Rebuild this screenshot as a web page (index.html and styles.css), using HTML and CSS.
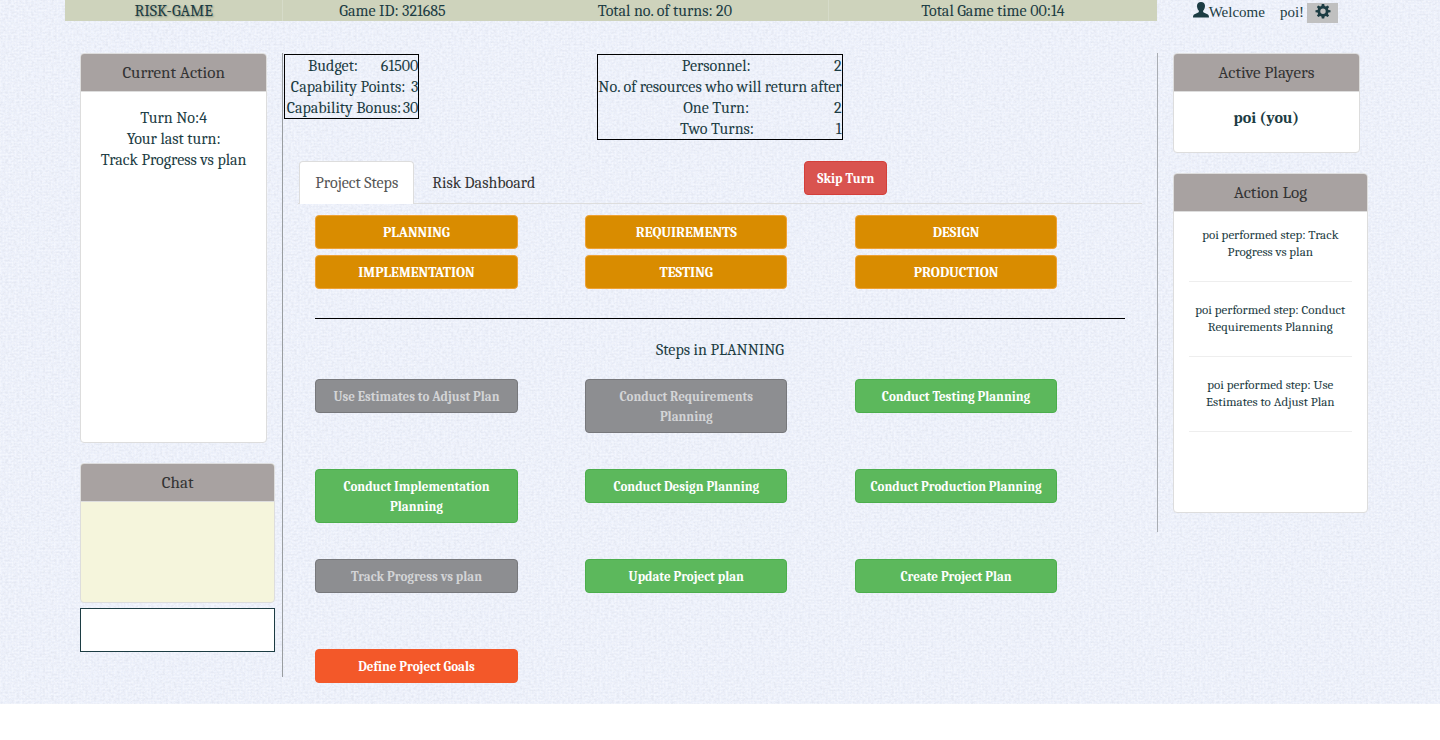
FILE: index.html
```html
<!DOCTYPE html>
<html lang="en">
<head>
<meta charset="utf-8">
<title>RISK-GAME</title>
<link rel="stylesheet" href="styles.css">
</head>
<body>
<div class="page">
  <header class="topbar">
    <div class="stat brand">RISK-GAME</div>
    <div class="stat">Game ID: 321685</div>
    <div class="stat turns">Total no. of turns: 20</div>
    <div class="stat">Total Game time 00:14</div>
    <div class="user">
      <svg class="user-icon" viewBox="0 0 16 16" aria-hidden="true"><path d="M8 0C10.500 0 12 1.400 12 3.800C12 5.800 11.300 7.600 10.300 8.600C9.900 9.300 10 10.200 10.700 10.600L14.500 12.300C15.600 12.900 16 13.800 16 15.500H0C0 13.800 .4 12.900 1.500 12.300L5.300 10.600C6 10.200 6.100 9.300 5.700 8.600C4.700 7.600 4 5.800 4 3.800C4 1.400 5.500 0 8 0Z"/></svg>
      <span class="welcome">Welcome</span><span class="name">poi!</span>
      <button class="settings" type="button" aria-label="Settings">
        <svg class="cog" viewBox="0 0 16 16" aria-hidden="true"><path fill-rule="evenodd" d="M6.800 1H9.200L9.600 3.100L10.900 3.600L12.700 2.400L14.100 3.900L12.900 5.700L13.400 6.900L15.500 7.200V9.200L13.400 9.600L12.900 10.900L14.100 12.600L12.600 14.100L10.900 12.900L9.600 13.400L9.200 15.500H6.800L6.400 13.400L5.100 12.900L3.400 14.100L1.900 12.600L3.100 10.900L2.600 9.600L.5 9.200V7.200L2.600 6.900L3.100 5.700L1.900 3.900L3.300 2.400L5.100 3.600L6.400 3.100ZM8 5.500A2.700 2.700 0 1 0 8 10.900A2.700 2.700 0 1 0 8 5.500Z"/></svg>
      </button>
    </div>
  </header>

  <div class="board">
    <aside class="left">
      <section class="panel action">
        <h2 class="panel-title">Current Action</h2>
        <div class="panel-body">Turn No:4<br>Your last turn:<br>Track Progress vs plan</div>
      </section>
      <section class="panel chat">
        <h2 class="panel-title">Chat</h2>
        <div class="panel-body"></div>
      </section>
      <input class="chat-input" type="text" aria-label="Chat message">
    </aside>

    <main class="center">
      <div class="resources">
        <dl class="figures">
          <div><dt>Budget:</dt><dd>61500</dd></div>
          <div><dt>Capability Points:</dt><dd>3</dd></div>
          <div><dt>Capability Bonus:</dt><dd>30</dd></div>
        </dl>
        <dl class="figures staff">
          <div><dt>Personnel:</dt><dd>2</dd></div>
          <div><dt>No. of resources who will return after</dt></div>
          <div><dt>One Turn:</dt><dd>2</dd></div>
          <div><dt>Two Turns:</dt><dd>1</dd></div>
        </dl>
      </div>

      <div class="tabs">
        <nav class="tab-list">
          <a class="tab active" href="#steps">Project Steps</a>
          <a class="tab" href="#risks">Risk Dashboard</a>
        </nav>
        <div><button class="btn skip" type="button">Skip Turn</button></div>
      </div>

      <div class="tab-page" id="steps">
        <div class="phases">
          <button class="btn phase" type="button">PLANNING</button>
          <button class="btn phase" type="button">REQUIREMENTS</button>
          <button class="btn phase" type="button">DESIGN</button>
          <button class="btn phase" type="button">IMPLEMENTATION</button>
          <button class="btn phase" type="button">TESTING</button>
          <button class="btn phase" type="button">PRODUCTION</button>
        </div>
        <hr class="rule">
        <p class="caption">Steps in PLANNING</p>
        <div class="steps">
          <button class="btn done" type="button" disabled>Use Estimates to Adjust Plan</button>
          <button class="btn done" type="button" disabled>Conduct Requirements<br>Planning</button>
          <button class="btn open" type="button">Conduct Testing Planning</button>
          <button class="btn open" type="button">Conduct Implementation<br>Planning</button>
          <button class="btn open" type="button">Conduct Design Planning</button>
          <button class="btn open" type="button">Conduct Production Planning</button>
          <button class="btn done" type="button" disabled>Track Progress vs plan</button>
          <button class="btn open" type="button">Update Project plan</button>
          <button class="btn open" type="button">Create Project Plan</button>
          <button class="btn urgent" type="button">Define Project Goals</button>
        </div>
      </div>
    </main>

    <aside class="right">
      <section class="panel players">
        <h2 class="panel-title">Active Players</h2>
        <div class="panel-body"><strong>poi (you)</strong></div>
      </section>
      <section class="panel log">
        <h2 class="panel-title">Action Log</h2>
        <ul class="entries">
          <li>poi performed step: Track Progress vs plan</li>
          <li>poi performed step: Conduct Requirements Planning</li>
          <li>poi performed step: Use Estimates to Adjust Plan</li>
        </ul>
      </section>
    </aside>
  </div>
</div>
</body>
</html>
```
FILE: styles.css
```css
* { box-sizing: border-box; }

body {
  margin: 0;
  background: #fff;
  color: #1c3c43;
  font-family: Cambria, "Liberation Serif", serif;
  font-size: 16px;
  line-height: 21px;
}

button, input { font: inherit; }

/* Pale woven paper: fine noise stretched along the thread direction. */
.page {
  padding: 0 65px 20px;
  background-color: #eff3fd;
  background-image:
    url("data:image/svg+xml,%3Csvg xmlns='http://www.w3.org/2000/svg' width='300' height='300'%3E%3Cfilter id='h' x='0' y='0' width='100%25' height='100%25'%3E%3CfeTurbulence type='fractalNoise' baseFrequency='.35 .5' numOctaves='2' seed='4' stitchTiles='stitch'/%3E%3CfeColorMatrix values='0 0 0 0 .75 0 0 0 0 .78 0 0 0 0 .87 1.8 0 0 0 -.65'/%3E%3C/filter%3E%3Crect width='300' height='300' filter='url(%23h)'/%3E%3C/svg%3E"),
    repeating-linear-gradient(0deg, rgba(255, 255, 255, .2) 0 1px, transparent 1px 3px),
    repeating-linear-gradient(90deg, rgba(255, 255, 255, .2) 0 1px, transparent 1px 3px);
}

.topbar {
  display: grid;
  grid-template-columns: 2fr 2fr 3fr 3fr 2fr;
  grid-template-rows: 21px;
  margin-bottom: 32px;
}

.stat { padding-top: 1px; background: #ced3bc; text-align: center; }
.brand { border-right: 1px solid #d6dbc9; text-shadow: 1px 1px 2px #89917d; }
.turns { border-right: 1px solid #d6dbc9; }

.user {
  display: flex;
  align-items: flex-start;
  padding: 2px 0 0 36px;
  font-family: "Liberation Serif", serif;
  font-size: 15px;
}
.user-icon { width: 16px; height: 16px; fill: #1c3c43; }
.name { margin: 0 3px 0 15px; }
.settings {
  display: flex;
  justify-content: center;
  width: 31px;
  height: 20px;
  margin-top: 1px;
  padding: 0;
  border: 0;
  background: #c0c0c0;
}
.cog { width: 16px; height: 16px; fill: #1c3c43; }

.board {
  display: grid;
  grid-template-columns: minmax(0, 2fr) minmax(0, 8fr) minmax(0, 2fr);
  align-items: start;
}

.left { padding: 0 15px 25px; border-right: 1px solid #999da0; }
.right { padding: 0 15px 19px; border-left: 1px solid #a9adb3; }

.panel {
  margin-bottom: 20px;
  border: 1px solid #ddd;
  border-radius: 4px;
  background: #fff;
  text-align: center;
}
.panel-title {
  margin: 0;
  padding: 8px 15px;
  border-bottom: 1px solid #ddd;
  border-radius: 3px 3px 0 0;
  background: #a8a2a1;
  color: #333;
  font-size: 17px;
  font-weight: 400;
}
.panel-body { padding: 16px 15px; }

.action { min-height: 390px; }
.players { min-height: 100px; }
.chat { margin: 0 -8px 5px 0; background: #f5f5dc; }
.chat .panel-body { height: 100px; }
.chat-input {
  display: block;
  width: calc(100% + 8px);
  height: 44px;
  padding: 8px;
  border: 1px solid #1c3c43;
  border-radius: 0;
  background: #fff;
}

.log { min-height: 340px; margin-right: -8px; margin-bottom: 0; }
.entries { margin: 0; padding: 0 15px; list-style: none; font-size: 13px; line-height: 17px; }
.entries li { height: 75px; padding: 19px 5px; border-bottom: 1px solid #eee; }
.entries li:first-child { height: 70px; padding-top: 14px; }

.center { padding: 0 15px; }

.resources {
  display: grid;
  grid-template-columns: 1fr auto 1fr;
  align-items: start;
  height: 108px;
  margin: 0 -14px;
  padding-top: 1px;
}
.figures {
  justify-self: start;
  width: 135px;
  margin: 0;
  border: 1px solid #000;
  line-height: 23px;
  white-space: nowrap;
}
.staff { width: auto; }
.figures div { display: flex; height: 21px; }
.figures dt { flex: 1; text-align: center; }
.figures dd { margin: 0; }

.tabs {
  display: grid;
  grid-template-columns: 60% 40%;
  height: 43px;
  border-bottom: 1px solid #ddd;
}
.tab-list { display: flex; gap: 2px; margin-bottom: -1px; padding-left: 1px; }
.tab {
  padding: 11px 15px 10px;
  border: 1px solid transparent;
  border-bottom: 0;
  border-radius: 4px 4px 0 0;
  color: #333;
  text-decoration: none;
}
.tab.active { border-color: #ddd; background: #fff; color: #555; }

.btn {
  min-height: 34px;
  padding: 7px 12px 5px;
  border: 1px solid;
  border-radius: 4px;
  color: #fff;
  font-size: 13px;
  font-weight: 700;
  line-height: 20px;
}
.skip { background: #d9534f; border-color: #d43f3a; }

.tab-page { padding: 11px 17px 0; }
.phases, .steps { display: grid; grid-template-columns: repeat(3, 1fr); align-items: start; }
.phases .btn, .steps .btn { width: 75%; }
.phases { row-gap: 6px; }
.steps { grid-auto-rows: 90px; margin-bottom: -55px; }
.phase { background: #d98c00; border-color: #eea236; font-size: 14px; }
.open { background: #5cb85c; border-color: #4cae4c; }
.done { background: #8d8e91; border-color: #77787b; color: #d3d4d6; }
.urgent { background: #f35829; border-color: #f35829; }

.rule { margin: 29px 0 21px; border: 0; border-top: 1px solid #000; }
.caption { margin: 0 0 18px; text-align: center; }
```
